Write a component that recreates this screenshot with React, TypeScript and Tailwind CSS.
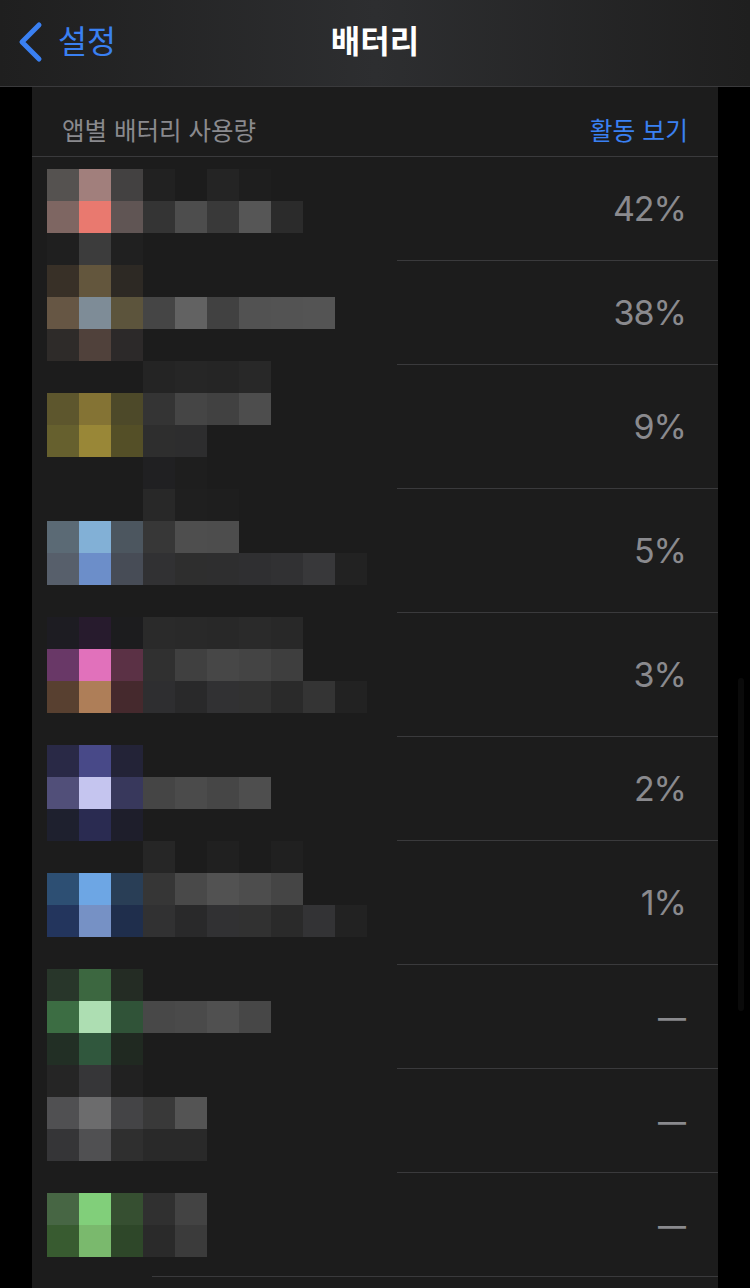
const BG = '#1c1c1c'

// pixelated blur over the app icons and names, one entry per 32px band
const mosaic: string[][] = [
  ['#595553', '#a98582', '#464343', '#222222', '#1d1d1d', '#252525', '#1f1f1f'],
  ['#846a66', '#f57f74', '#645957', '#363636', '#505050', '#3b3b3b', '#5a5a5a', '#2c2c2c'],
  ['#202020', '#3e3e3e', '#212121', '#1d1d1d'],
  ['#3a3228', '#675a3f', '#2e2a25'],
  ['#6a5a47', '#84929e', '#60573e', '#484848', '#666666', '#444444', '#555555', '#565656', '#585858'],
  ['#302c2a', '#53443d', '#2d2a2a'],
  [BG, BG, BG, '#252525', '#272727', '#262626', '#292929'],
  ['#615a2e', '#8a7836', '#504c2a', '#363636', '#484848', '#434343', '#505050'],
  ['#6b6430', '#a08d39', '#585228', '#2f2f2f', '#2e2e30'],
  [BG, BG, BG, '#212123', '#1f1f1f'],
  [BG, BG, BG, '#292929', '#202020', '#1f1f1f'],
  ['#5f6f7a', '#88b8e0', '#4f5a63', '#393939', '#515151', '#505050'],
  ['#5b6370', '#7195d3', '#4a4f5a', '#333335', '#2f2f30', '#2f2f31', '#313133', '#333335', '#3a3a3c', '#232323'],
  [],
  ['#1e1d23', '#281b2e', '#1d1d1f', '#2b2b2b', '#2a2a2a', '#292929', '#2b2b2b', '#292929'],
  ['#6e3a6c', '#ec76c4', '#5f3348', '#323232', '#424242', '#4a4a4a', '#474747', '#404040'],
  ['#5c4232', '#b6845c', '#482a2e', '#303032', '#2a2a2b', '#333335', '#333333', '#2b2b2b', '#363636', '#232323'],
  [],
  ['#2a2a49', '#4b4c8e', '#242439'],
  ['#54527e', '#cfcffb', '#3a3a60', '#484848', '#4e4e4e', '#494949', '#515151'],
  ['#1f2130', '#2b2c54', '#1f1f2c'],
  [BG, BG, BG, '#272727', '#1c1c1c', '#212121', '#1c1c1c', '#212121'],
  ['#2e5278', '#72aeef', '#2a405a', '#383838', '#4c4c4c', '#555555', '#505050', '#484848'],
  ['#243761', '#7b98cf', '#20304f', '#333334', '#2a2a2b', '#333335', '#333333', '#2b2b2b', '#353537', '#232323'],
  [],
  ['#29382b', '#3e6c42', '#252d25'],
  ['#3e7246', '#b5e9bb', '#32563a', '#4b4b4b', '#4d4d4d', '#535353', '#4a4a4a'],
  ['#233126', '#325b3f', '#212a22'],
  ['#262626', '#38383a', '#222222', '#1d1d1d'],
  ['#535355', '#717172', '#474749', '#3b3b3b', '#585858'],
  ['#373739', '#535355', '#313131', '#2a2a2a', '#2a2a2a'],
  [],
  ['#4a6b47', '#87d980', '#385233', '#323232', '#464646', '#1d1d1d'],
  ['#3a5f32', '#80c272', '#304a2a', '#2b2b2b', '#3d3d3d'],
]

const rows = [
  { value: '42%', tall: false },
  { value: '38%', tall: false },
  { value: '9%', tall: true },
  { value: '5%', tall: true },
  { value: '3%', tall: true },
  { value: '2%', tall: false },
  { value: '1%', tall: true },
  { value: '—', tall: false },
  { value: '—', tall: false },
  { value: '—', tall: false, last: true },
]

function BatteryRow({ value, tall, last }: { value: string; tall: boolean; last?: boolean }) {
  return (
    <div className={`flex justify-end ${tall ? 'h-[124px]' : 'h-[104px]'}`}>
      <div
        className={`flex items-center justify-end border-b border-[#3a3a3c] pr-[32px] ${
          last ? 'w-[566px]' : 'w-[321px]'
        }`}
      >
        {value === '—' ? (
          <span className="pt-[3px] text-[28px] font-medium leading-none text-[#8a8a8e]">{value}</span>
        ) : (
          <span className="text-[34px] font-normal leading-none tracking-[-1px] text-[#8a8a8e]">{value}</span>
        )}
      </div>
    </div>
  )
}

export default function App() {
  return (
    <div
      className="relative flex h-[1288px] flex-col overflow-hidden bg-black"
      style={{ fontFamily: 'Inter, "Noto Sans CJK KR", sans-serif' }}
    >
      {/* Nav bar */}
      <header className="relative flex h-[87px] shrink-0 items-center justify-center border-b border-[#3a3a3c] bg-gradient-to-r from-[#1f1f1f] via-[#2d2e30] to-[#1f1f1f]">
        <div className="absolute left-[18px] top-0 flex h-[83px] items-center gap-[14px] text-[#3a80f2]">
          <svg width="26" height="42" viewBox="0 0 26 42" fill="none">
            <path
              d="M21 4 L4 21 L21 38"
              stroke="currentColor"
              strokeWidth="5"
              strokeLinecap="round"
              strokeLinejoin="round"
            />
          </svg>
          <span className="text-[31.5px] leading-none">설정</span>
        </div>
        <h1 className="-mt-[3px] text-[32px] font-bold leading-none text-white">배터리</h1>
      </header>

      {/* Card */}
      <main className="relative mx-[32px] flex-1 bg-[#1c1c1c]">
        <div className="flex h-[70px] items-center justify-between border-b border-[#3a3a3c] pl-[30px] pr-[30px] pt-[19px]">
          <span className="text-[24.5px] leading-none text-[#8a8a8e]">앱별 배터리 사용량</span>
          <span className="text-[24.8px] leading-none text-[#3a80f2]">활동 보기</span>
        </div>

        {rows.map((row, i) => (
          <BatteryRow key={i} value={row.value} tall={row.tall} last={row.last} />
        ))}

        {/* Mosaic overlay */}
        <div className="pointer-events-none absolute left-[15px] top-[82px] opacity-95">
          {mosaic.map((band, i) => (
            <div key={i} className="flex h-8">
              {band.map((color, j) => (
                <div key={j} className="h-8 w-8" style={{ backgroundColor: color }} />
              ))}
            </div>
          ))}
        </div>
      </main>

      {/* Scrollbar */}
      <div className="absolute left-[738px] top-[678px] h-[333px] w-[6px] rounded-full bg-[#0a0a0a]" />
    </div>
  )
}
